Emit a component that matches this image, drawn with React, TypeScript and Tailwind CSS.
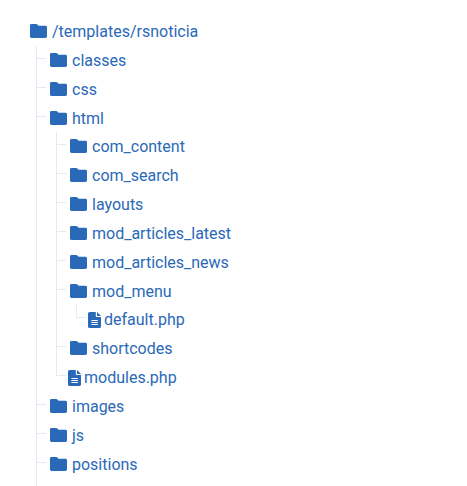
import React from "react";

type Entry = {
  name: string;
  kind?: "file";
  children?: Entry[];
};

const root: Entry = {
  name: "/templates/rsnoticia",
  children: [
    { name: "classes" },
    { name: "css" },
    {
      name: "html",
      children: [
        { name: "com_content" },
        { name: "com_search" },
        { name: "layouts" },
        { name: "mod_articles_latest" },
        { name: "mod_articles_news" },
        { name: "mod_menu", children: [{ name: "default.php", kind: "file" }] },
        { name: "shortcodes" },
        { name: "modules.php", kind: "file" },
      ],
    },
    { name: "images" },
    { name: "js" },
    { name: "positions" },
    { name: "" },
    { name: "" },
  ],
};

function FolderIcon() {
  return (
    <svg className="h-4 w-[17px] shrink-0" viewBox="0 0 17 16" fill="currentColor" aria-hidden="true">
      <path d="M1.4 0H6.2Q6.9 0 7.4.5L8.6 1.8H15.4Q17 1.8 17 3.2V12.6Q17 14 15.5 14H1.4Q0 14 0 12.6V1.4Q0 0 1.4 0Z" />
    </svg>
  );
}

function FileIcon() {
  return (
    <svg className="h-4 w-[13px] shrink-0" viewBox="0 0 13 16" fill="currentColor" aria-hidden="true">
      <path
        fillRule="evenodd"
        d="M1.6 0H7.8V4Q7.8 5 8.8 5H13V14.4Q13 16 11.4 16H1.6Q0 16 0 14.4V1.6Q0 0 1.6 0ZM3.4 8V9H9.8V8ZM3.4 10V11H9.8V10ZM3.4 12V13H9.8V12Z"
      />
      <path d="M9 0L13 4H9Z" />
    </svg>
  );
}

function Row({ entry }: { entry: Entry }) {
  const isFile = entry.kind === "file";
  return (
    <a href="#" className={isFile ? "flex h-[29px] items-center gap-[3px] pl-0.5" : "flex h-[29px] items-center gap-[5px] pl-1"}>
      {isFile ? <FileIcon /> : <FolderIcon />}
      <span>{entry.name}</span>
    </a>
  );
}

function Branch({ entries, nested = false }: { entries: Entry[]; nested?: boolean }) {
  return (
    <ul className={nested ? "-mt-px ml-[10px]" : "ml-[10px]"}>
      {entries.map((entry, i) => {
        const last = i === entries.length - 1;
        return (
          <li key={i} className="flex">
            <div className={last ? "w-[10px] shrink-0" : "w-[10px] shrink-0 border-l border-[#e4eaf5]"}>
              <div className={last ? "h-[13px] border-b border-l border-[#e4eaf5]" : "h-[13px] border-b border-[#e4eaf5]"} />
            </div>
            <div className="min-w-0 flex-1">
              <Row entry={entry} />
              {entry.children && <Branch entries={entry.children} nested />}
            </div>
          </li>
        );
      })}
    </ul>
  );
}

export default function App() {
  return (
    <nav className="h-screen overflow-hidden bg-white pt-[17px] pl-[26px] font-['Roboto',sans-serif] text-base text-[#2a69b8]">
      <Row entry={root} />
      <Branch entries={root.children ?? []} />
    </nav>
  );
}
